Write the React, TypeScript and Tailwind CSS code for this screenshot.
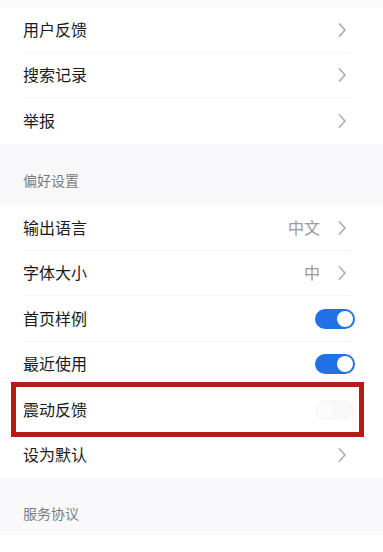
import React from "react";

const font = { fontFamily: '"Noto Sans CJK SC", "Noto Sans", sans-serif' };

function Chevron() {
  return (
    <svg width="10" height="16" viewBox="0 0 10 16" className="shrink-0">
      <path d="M2.5 2 L8 8 L2.5 14" fill="none" stroke="#b0b0b0" strokeWidth="1.8" strokeLinecap="round" strokeLinejoin="round" />
    </svg>
  );
}

function Toggle({ on }: { on: boolean }) {
  return on ? (
    <div className="w-[40px] h-[20px] rounded-full bg-[#2070e6] relative">
      <div className="absolute right-[2px] top-[2px] w-[16px] h-[16px] rounded-full bg-white" />
    </div>
  ) : (
    <div className="w-[40px] h-[20px] rounded-full bg-[#f8f8f9] relative">
      <div className="absolute left-[2px] top-[2px] w-[16px] h-[16px] rounded-full bg-[#fcfcfd]" />
    </div>
  );
}

type Row = { label: string; value?: string; toggle?: boolean; chevron?: boolean; last?: boolean };

function ListRow({ r }: { r: Row }) {
  return (
    <div className="h-[45.5px] flex items-center pl-[23px] relative">
      <span className="text-[16px] text-[#1a1a1a] flex-1 leading-none -translate-y-[1.5px]">{r.label}</span>
      {r.value && <span className="text-[16px] text-[#9a9a9a] mr-[17px] leading-none -translate-y-[1.5px]">{r.value}</span>}
      {r.chevron && (
        <div className="mr-[36px]">
          <Chevron />
        </div>
      )}
      {r.toggle !== undefined && (
        <div className="mr-[28px]">
          <Toggle on={r.toggle} />
        </div>
      )}
      {!r.last && <div className="absolute left-[23px] right-[32px] bottom-0 h-px bg-[#f3f3f5]" />}
    </div>
  );
}

export default function App() {
  const card1: Row[] = [
    { label: "用户反馈", chevron: true },
    { label: "搜索记录", chevron: true },
    { label: "举报", chevron: true, last: true },
  ];
  const card2: Row[] = [
    { label: "输出语言", value: "中文", chevron: true },
    { label: "字体大小", value: "中", chevron: true },
    { label: "首页样例", toggle: true },
    { label: "最近使用", toggle: true },
    { label: "震动反馈", toggle: false },
    { label: "设为默认", chevron: true, last: true },
  ];
  return (
    <div className="w-[383px] h-[552px] bg-white overflow-hidden relative" style={font}>
      <div className="h-[7px] bg-[#fafafb]" />
      <div className="bg-white">
        {card1.map((r) => (
          <ListRow key={r.label} r={r} />
        ))}
      </div>
      <div className="h-[61.5px] bg-[#f8f8fa] flex items-end pl-[23px] pb-[18px]">
        <span className="text-[14px] text-[#7c7c7c] leading-none">偏好设置</span>
      </div>
      <div className="bg-white">
        {card2.map((r) => (
          <ListRow key={r.label} r={r} />
        ))}
      </div>
      <div className="h-[57px] bg-[#f9f9fb] flex items-end pl-[23px] pb-[15px]">
        <span className="text-[14px] text-[#7c7c7c] leading-none">服务协议</span>
      </div>
      <div className="absolute left-[11px] top-[382px] w-[353px] h-[55px] border-[5px] border-[#b31c17] pointer-events-none" />
    </div>
  );
}
